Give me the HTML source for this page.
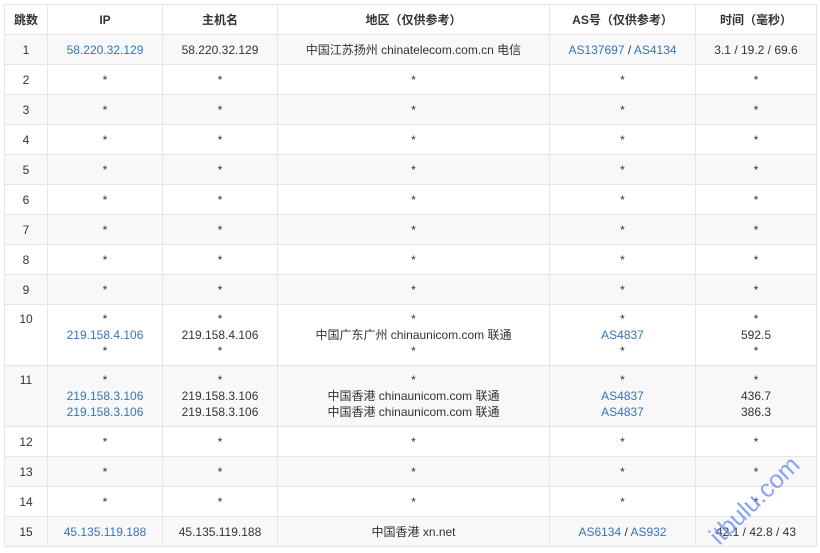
<!DOCTYPE html>
<html><head><meta charset="utf-8"><style>
body{margin:0;background:#fff;width:820px;height:553px;overflow:hidden;position:relative;font-family:"Liberation Sans","Noto Sans CJK SC",sans-serif;font-size:12px;color:#333}
table{position:absolute;left:4px;top:4px;border-collapse:collapse;width:812px;table-layout:fixed}
td,th{border:1px solid #e6e6e6;text-align:center;padding:0;line-height:16px}
th{height:29px;font-weight:bold;color:#333}
td{height:29px}
tr.m td{height:48px;padding:6px 0;vertical-align:top}
tr.g td{background:#f8f8f8}
a{color:#3774b8;text-decoration:none}
.wm{position:absolute;left:704px;top:530px;color:#6e8ef0;font-size:25px;transform:rotate(-44deg);transform-origin:left top;opacity:.8;white-space:nowrap}
</style></head><body>
<table>
<colgroup><col style="width:43px"><col style="width:115px"><col style="width:115px"><col style="width:272px"><col style="width:146px"><col style="width:121px"></colgroup>
<tr><th>跳数</th><th>IP</th><th>主机名</th><th>地区（仅供参考）</th><th>AS号（仅供参考）</th><th>时间（毫秒）</th></tr>
<tr class="g"><td>1</td><td><a>58.220.32.129</a></td><td>58.220.32.129</td><td>中国江苏扬州 chinatelecom.com.cn 电信</td><td><a>AS137697</a> / <a>AS4134</a></td><td>3.1 / 19.2 / 69.6</td></tr>
<tr><td>2</td><td>*</td><td>*</td><td>*</td><td>*</td><td>*</td></tr>
<tr class="g"><td>3</td><td>*</td><td>*</td><td>*</td><td>*</td><td>*</td></tr>
<tr><td>4</td><td>*</td><td>*</td><td>*</td><td>*</td><td>*</td></tr>
<tr class="g"><td>5</td><td>*</td><td>*</td><td>*</td><td>*</td><td>*</td></tr>
<tr><td>6</td><td>*</td><td>*</td><td>*</td><td>*</td><td>*</td></tr>
<tr class="g"><td>7</td><td>*</td><td>*</td><td>*</td><td>*</td><td>*</td></tr>
<tr><td>8</td><td>*</td><td>*</td><td>*</td><td>*</td><td>*</td></tr>
<tr class="g"><td>9</td><td>*</td><td>*</td><td>*</td><td>*</td><td>*</td></tr>
<tr class="m"><td>10</td><td>*<br><a>219.158.4.106</a><br>*</td><td>*<br>219.158.4.106<br>*</td><td>*<br>中国广东广州 chinaunicom.com 联通<br>*</td><td>*<br><a>AS4837</a><br>*</td><td>*<br>592.5<br>*</td></tr>
<tr class="g m"><td>11</td><td>*<br><a>219.158.3.106</a><br><a>219.158.3.106</a></td><td>*<br>219.158.3.106<br>219.158.3.106</td><td>*<br>中国香港 chinaunicom.com 联通<br>中国香港 chinaunicom.com 联通</td><td>*<br><a>AS4837</a><br><a>AS4837</a></td><td>*<br>436.7<br>386.3</td></tr>
<tr><td>12</td><td>*</td><td>*</td><td>*</td><td>*</td><td>*</td></tr>
<tr class="g"><td>13</td><td>*</td><td>*</td><td>*</td><td>*</td><td>*</td></tr>
<tr><td>14</td><td>*</td><td>*</td><td>*</td><td>*</td><td>*</td></tr>
<tr class="g"><td>15</td><td><a>45.135.119.188</a></td><td>45.135.119.188</td><td>中国香港 xn.net</td><td><a>AS6134</a> / <a>AS932</a></td><td>42.1 / 42.8 / 43</td></tr>
</table>
<div class="wm">itbulu.com</div>
</body></html>
